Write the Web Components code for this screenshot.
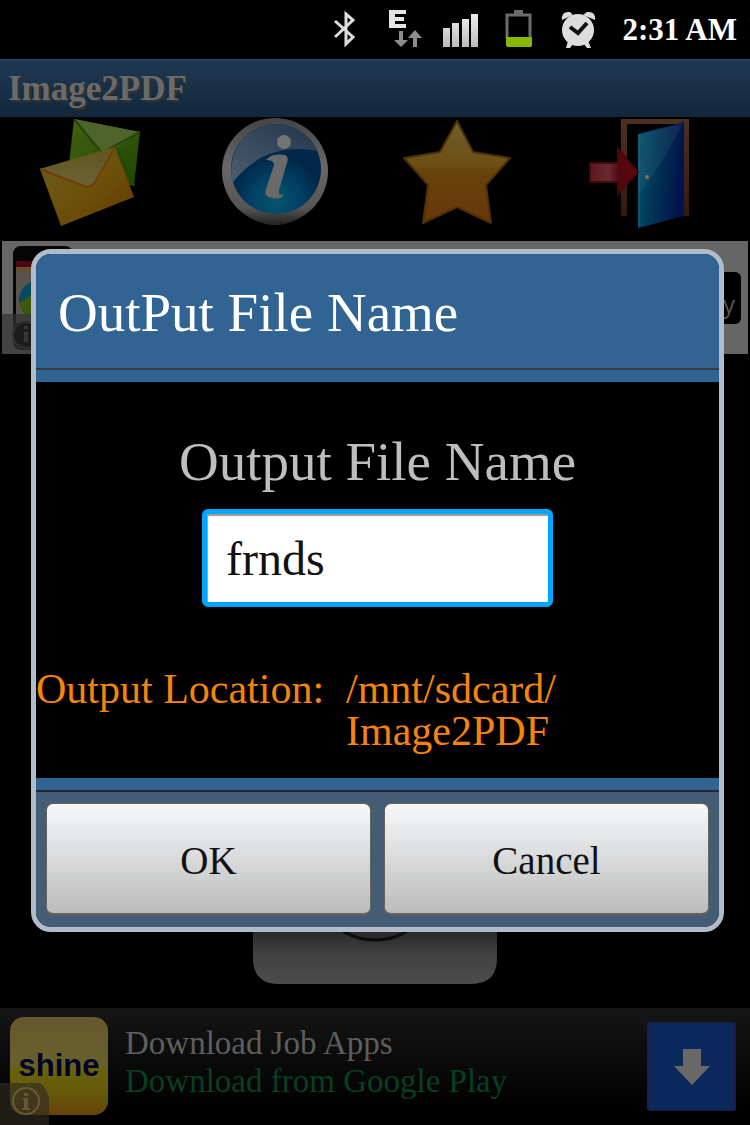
<!DOCTYPE html>
<html lang="en">
<head>
<meta charset="utf-8">
<title>Image2PDF</title>
<style>
html,body{margin:0;background:#000;font-family:"Liberation Serif",serif}
</style>
</head>
<body>
<pdf-app></pdf-app>
<script>
const define=(name,html)=>{
  const t=document.createElement('template');
  t.innerHTML='<style>*{box-sizing:border-box}svg{display:block}</style>'+html;
  customElements.define(name,class extends HTMLElement{
    constructor(){super();this.attachShadow({mode:'open'}).append(t.content.cloneNode(true));}
  });
};

define('status-bar',`
<style>
:host{display:flex;height:59px;align-items:center;justify-content:flex-end;padding-right:13px;background:#000;color:#fff}
time{font-size:31px;font-weight:bold;line-height:40px}
</style>
<svg width="288" height="59" viewBox="0 0 288 59" aria-hidden="true">
  <defs><linearGradient id="g" x2="0" y2="1"><stop stop-color="#eee"/><stop offset="1" stop-color="#bbb"/></linearGradient></defs>
  <path d="M1 21L19 37L12 44V14L19 20L1 37" fill="none" stroke="#ddd" stroke-width="3"/>
  <path d="M55 10H72V14H61V17H70V21H61V24H72V28H55Z" fill="#e4e4e4"/>
  <path d="M65 31H69V40H74L67 47L60 40H65ZM79 47H83V38H88L81 30L74 38H79Z" fill="#8c8c8c"/>
  <path d="M109 28H116V47H109ZM118 23H125V47H118ZM128 19H135V47H128ZM137 14H144V47H137Z" fill="url(#g)"/>
  <path d="M173 38V15H196V38" fill="none" stroke="#6c6c6c" stroke-width="3"/>
  <path d="M180 10H189V15H180Z" fill="#6c6c6c"/>
  <path d="M172 37H198V45Q198 47 196 47H174Q172 47 172 45Z" fill="#86b800"/>
  <g fill="#ddd">
    <path d="M228 20Q227 11 236 12L239 15ZM261 20Q262 11 253 12L249 15Z"/>
    <path d="M234 41L232 48H236L239 44ZM254 41L257 48H253L250 44Z"/>
    <circle cx="244" cy="30" r="16"/>
  </g>
  <path d="M236 27L244 33L253 23" fill="none" stroke="#111" stroke-width="4"/>
</svg>
<time>2:31 AM</time>
`);

define('title-bar',`
<style>
:host{display:block;height:58px;padding:0 8px;background:linear-gradient(#1f3852,#12273b);border-top:2px solid #24415e}
h1{margin:0;font-size:35px;line-height:56px;color:#6a6a6a;text-shadow:2px 2px 1px #333}
</style>
<h1>Image2PDF</h1>
`);

define('tool-bar',`
<style>
:host{display:grid;grid-template-columns:repeat(4,1fr);height:124px;padding-right:18px}
button{display:flex;justify-content:center;align-items:flex-start;padding:0;border:0;background:none}
</style>
<button aria-label="Mail"><svg width="110" height="112" viewBox="0 0 110 112">
  <defs>
    <linearGradient id="y" x1="0" y1="0" x2="1" y2="1"><stop stop-color="#6b5d20"/><stop offset=".55" stop-color="#6c5009"/><stop offset="1" stop-color="#633700"/></linearGradient>
    <linearGradient id="f" x2="0" y2="1"><stop stop-color="#61551c"/><stop offset="1" stop-color="#6b6338"/></linearGradient>
    <linearGradient id="gr" x2="1" y2="1"><stop stop-color="#456012"/><stop offset="1" stop-color="#1e4700"/></linearGradient>
  </defs>
  <path d="M37 2L103 15L97 69L31 56Z" fill="url(#gr)"/>
  <path d="M37 2L103 15L68 38Z" fill="#4e642b"/>
  <path d="M37 2L65 36L103 15M79 30L97 69" fill="none" stroke="#24450b" stroke-width="2"/>
  <path d="M3 52L78 30L97 80L24 109Z" fill="url(#y)"/>
  <path d="M3 52L78 30L57 67Q53 71 48 69Z" fill="url(#f)"/>
  <path d="M3 52L47 69Q54 71 58 65L78 30" fill="none" stroke="#713d08" stroke-width="2"/>
</svg></button>
<button aria-label="About"><svg width="110" height="112" viewBox="0 0 110 112">
  <defs>
    <radialGradient id="b" cy=".85"><stop stop-color="#07566c"/><stop offset=".55" stop-color="#023f64"/><stop offset="1" stop-color="#012749"/></radialGradient>
    <linearGradient id="r" x2="0" y2="1"><stop stop-color="#444"/><stop offset=".45" stop-color="#686868"/><stop offset=".85" stop-color="#555"/><stop offset="1" stop-color="#222"/></linearGradient>
    <linearGradient id="h" x1=".8" x2="0" y2="1"><stop stop-color="#263950"/><stop offset="1" stop-color="#4c5f70"/></linearGradient>
  </defs>
  <ellipse cx="55" cy="60" rx="47" ry="48" fill="#2d2d2d"/>
  <circle cx="55" cy="54" r="53" fill="url(#r)"/>
  <circle cx="56" cy="52" r="45" fill="url(#b)"/>
  <path d="M12 66C7 32 27 7 56 7C75 7 91 19 97 34C59 27 33 40 12 66Z" fill="url(#h)"/>
  <circle cx="64" cy="25" r="7" fill="#747474"/>
  <path d="M46 43Q52 36 65 38Q70 41 66 49L59 73Q58 80 64 77Q61 83 53 81Q43 80 46 72L54 48Q54 43 46 43Z" fill="#6a6a6a"/>
</svg></button>
<button aria-label="Rate"><svg width="110" height="112" viewBox="0 0 110 112">
  <defs><linearGradient id="s" x2="0" y2="1"><stop stop-color="#70602b"/><stop offset=".43" stop-color="#6c4f14"/><stop offset=".5" stop-color="#66430c"/><stop offset="1" stop-color="#6a3608"/></linearGradient></defs>
  <path d="M54 4L70 35L107 41L83 68L88 106L54 90L20 106L25 68L1 41L37 35Z" fill="url(#s)" stroke="#4b3009" stroke-width="2" stroke-linejoin="round"/>
</svg></button>
<button aria-label="Exit"><svg width="110" height="112" viewBox="0 0 110 112">
  <defs>
    <linearGradient id="d" x2="1" y2=".2"><stop stop-color="#00516b"/><stop offset=".6" stop-color="#012c52"/><stop offset="1" stop-color="#00134a"/></linearGradient>
    <linearGradient id="w" x2="0" y2="1"><stop stop-color="#4d3021"/><stop offset="1" stop-color="#321a13"/></linearGradient>
    <linearGradient id="a" x2="1"><stop stop-color="#63151c"/><stop offset=".4" stop-color="#652a30"/><stop offset=".6" stop-color="#50070e"/><stop offset="1" stop-color="#620711"/></linearGradient>
  </defs>
  <path d="M35 2H103V99H97V7H41V99H35Z" fill="url(#w)"/>
  <path d="M52 17L98 5V99L52 111Z" fill="url(#d)"/>
  <path d="M53 18L97 6Q81 39 53 78Z" fill="#fff" opacity=".06"/>
  <path d="M53 17V110" stroke="#17697e"/>
  <path d="M4 46H32V32L52 55L32 77V65H4Z" fill="url(#a)" stroke="#47060b" stroke-width="2"/>
  <circle cx="61" cy="60" r="2" fill="#8a6e58"/>
</svg></button>
`);

define('banner-ad',`
<style>
:host{display:flex;justify-content:space-between;align-items:center;height:113px;margin:0 2px;background:#666}
span{display:flex;align-items:center;justify-content:flex-end;width:90px;height:52px;margin-right:7px;padding:12px 6px 0 0;border-radius:6px;background:#000;color:#555;font:24px "Open Sans",sans-serif}
</style>
<svg width="80" height="113" viewBox="0 0 80 113" aria-hidden="true">
  <rect x="11" y="5" width="60" height="104" rx="8" fill="#050505"/>
  <path d="M14 20H60V26H14Z" fill="#4b0711"/><path d="M14 26H60V30H14Z" fill="#655027"/>
  <path d="M14 30H60V82H14Z" fill="#59534e"/>
  <circle cx="36" cy="59" r="19" fill="#07495c"/><path d="M17 62L36 50V78Q20 76 17 62Z" fill="#3d5710"/>
  <path d="M0 73H45V113H0Z" fill="#333" opacity=".7"/>
  <circle cx="24" cy="94" r="13" fill="#1c1c1c" stroke="#303030" stroke-width="2"/><path d="M22 85H26V88H22ZM22 91H26V101H22Z" fill="#363636"/>
</svg>
<span>y</span>
`);

define('preview-panel',`
<style>
:host{display:flex;flex:1;align-items:flex-end;justify-content:center;padding-bottom:24px}
svg{height:94px}
</style>
<svg width="244" height="94" viewBox="0 0 244 94" aria-hidden="true">
  <defs><linearGradient id="p" x2="0" y2="1"><stop offset=".4" stop-color="#252525"/><stop offset=".7" stop-color="#424242"/><stop offset="1" stop-color="#4c4c4c"/></linearGradient></defs>
  <path d="M0 0H244V68Q244 94 218 94H26Q0 94 0 68Z" fill="url(#p)"/>
  <circle cx="122" cy="-11" r="61" fill="#292c2b" stroke="#0c0c0c" stroke-width="3"/>
</svg>
`);

define('job-ad',`
<style>
:host{display:flex;align-items:center;height:117px;padding:0 14px 0 0;background:linear-gradient(#151515,#000 90%)}
.logo{display:grid;position:relative;flex:none;width:108px;height:117px;padding:9px 0 10px 10px}
.logo b{display:grid;place-items:center;border-radius:14px;background:linear-gradient(#66572c,#67612c 50%,#69620c 52%,#665b0b 75%,#67430a);color:#020225;font:bold 31px/98px "Liberation Sans",sans-serif}
.logo svg{position:absolute;left:0;bottom:0}
p{flex:1;margin:0 0 9px 17px;font-size:33px;line-height:38px;color:#5e5e5e;white-space:nowrap}
a{color:#064020;text-decoration:none}
button{width:89px;height:89px;padding:0;display:grid;place-items:center;border:2px solid #15204f;border-radius:3px;background:#0a285c}
</style>
<div class="logo"><b>shine</b>
<svg width="49" height="42" viewBox="0 0 49 42" aria-hidden="true"><path d="M0 0H40Q47 5 49 16V42H0Z" fill="#302b20" opacity=".65"/><circle cx="26" cy="18" r="13" fill="none" stroke="#66583a" stroke-width="2"/><path d="M24 10H28V13H24ZM23 15H28V25H30V27H22V25H24V17H23Z" fill="#66583a"/></svg></div>
<p>Download Job Apps<br><a href="#">Download from Google Play</a></p>
<button aria-label="Download"><svg width="38" height="36" viewBox="0 0 38 36"><path d="M10 0H28V17H37L19 36L1 17H10Z" fill="#686868"/></svg></button>
`);

define('dialog-button',`
<style>
:host{display:block;flex:1}
button{width:100%;height:112px;padding:4px 0 0;border:1px solid #66625f;border-bottom-width:2px;border-radius:7px;background:linear-gradient(#f7f8fa,#dcddde 45%,#bcbcbc);color:#111;font:39px "Liberation Serif",serif}
</style>
<button><slot></slot></button>
`);

define('file-dialog',`
<style>
:host{display:block;border:5px solid #b0bcc9;border-radius:20px;background:#000;overflow:hidden}
h2{margin:0;padding:4px 0 0 22px;font-size:55px;font-weight:normal;line-height:110px;color:#fff;background:#316492}
.rule{height:14px;background:#316492;border-top:2px solid #333b42}
.rule.low{border-top:0;border-bottom:2px solid #202b35}
form{display:flex;flex-direction:column;align-items:center;padding:50px 0 26px}
label{font-size:55px;line-height:60px;color:#bebebe}
input{width:351px;height:98px;margin:17px 0 61px;padding:0 19px;border:5px solid #00a5ff;border-radius:6px;outline:0;background:#fff;box-shadow:inset 1px 2px 1px #999;color:#111;font:48px "Liberation Serif",serif}
dl{display:grid;grid-template-columns:310px 1fr;align-self:stretch;margin:0;font-size:42px;line-height:42px;color:#f5840c}
dt{white-space:nowrap}
dd{margin:0;white-space:pre-line}
footer{display:flex;gap:13px;padding:11px 10px 12px;background:#445d75}
</style>
<h2>OutPut File Name</h2>
<div class="rule"></div>
<form>
  <label for="name">Output File Name</label>
  <input id="name" type="text" value="frnds">
  <dl><dt>Output Location:</dt><dd>/mnt/sdcard/
Image2PDF</dd></dl>
</form>
<div class="rule low"></div>
<footer><dialog-button>OK</dialog-button><dialog-button>Cancel</dialog-button></footer>
`);

define('pdf-app',`
<style>
:host{display:flex;flex-direction:column;position:relative;min-height:100vh;background:#000}
.overlay{position:absolute;inset:0;display:flex;flex-direction:column;justify-content:center;padding:56px 26px 0 31px}
</style>
<status-bar></status-bar>
<title-bar></title-bar>
<tool-bar></tool-bar>
<banner-ad></banner-ad>
<preview-panel></preview-panel>
<job-ad></job-ad>
<div class="overlay"><file-dialog role="dialog" aria-label="Output file name"></file-dialog></div>
`);
</script>
</body>
</html>
